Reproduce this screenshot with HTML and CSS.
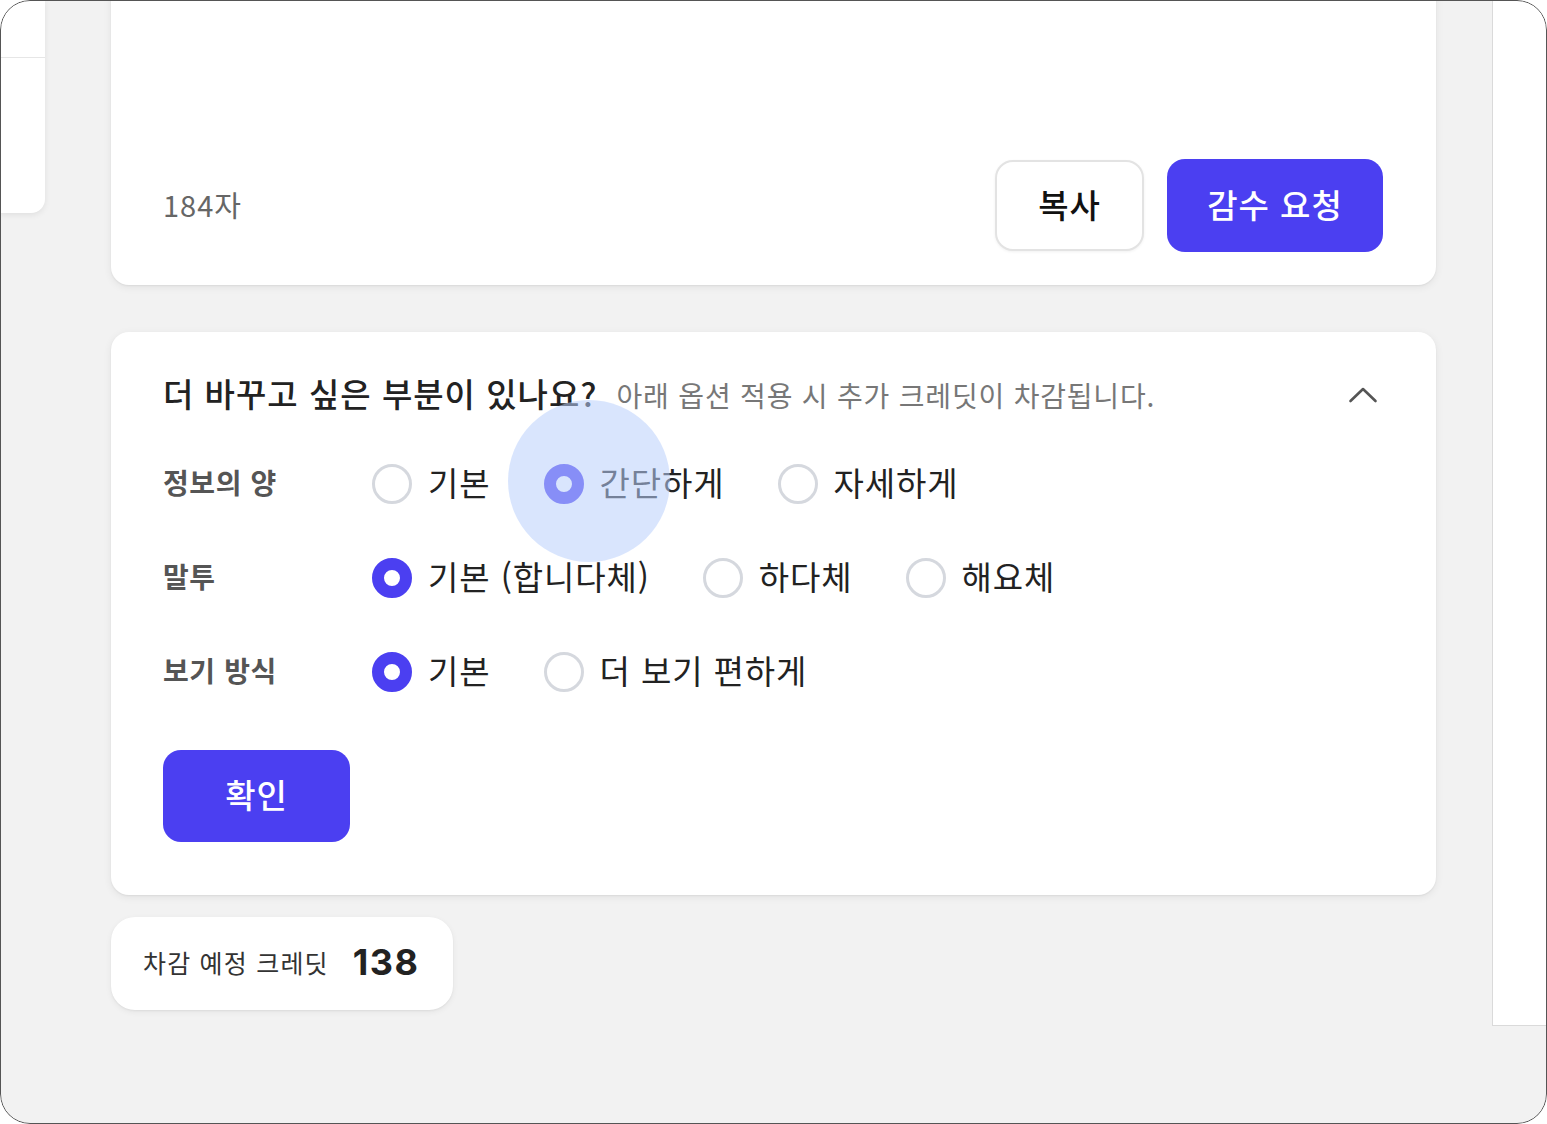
FILE: index.html
```html
<!DOCTYPE html>
<html lang="ko">
<head>
  <meta charset="UTF-8">
  <title>감수 옵션</title>
  <link rel="stylesheet" href="styles.css">
</head>
<body>

<div class="frame">
  <!-- left sidebar stub -->
  <div class="side-left">
    <div class="side-left-top"></div>
  </div>

  <div class="main">
    <!-- editor card -->
    <div class="card card-editor">
      <div class="editor-area"></div>
      <div class="editor-footer">
        <span class="char-count">184자</span>
        <div class="editor-actions">
          <button class="btn btn-outline">복사</button>
          <button class="btn btn-primary btn-wide">감수 요청</button>
        </div>
      </div>
    </div>

    <!-- options card -->
    <div class="card card-options">
      <div class="options-head">
        <span class="options-title">더 바꾸고 싶은 부분이 있나요?</span>
        <span class="options-sub">아래 옵션 적용 시 추가 크레딧이 차감됩니다.</span>
        <span class="chevron">
          <svg width="40" height="40" viewBox="0 0 40 40">
            <polyline points="7.5,26 20,14 32.5,26" fill="none" stroke="#555" stroke-width="2.6" stroke-linecap="round" stroke-linejoin="round"/>
          </svg>
        </span>
      </div>

      <div class="option-rows">
        <div class="option-row">
          <span class="option-label">정보의 양</span>
          <div class="option-list">
            <label class="option"><span class="radio"></span><span class="option-text">기본</span></label>
            <label class="option"><span class="radio is-checked"></span><span class="option-text">간단하게</span></label>
            <label class="option"><span class="radio"></span><span class="option-text">자세하게</span></label>
          </div>
        </div>
        <div class="option-row">
          <span class="option-label">말투</span>
          <div class="option-list">
            <label class="option"><span class="radio is-checked"></span><span class="option-text">기본 (합니다체)</span></label>
            <label class="option"><span class="radio"></span><span class="option-text">하다체</span></label>
            <label class="option"><span class="radio"></span><span class="option-text">해요체</span></label>
          </div>
        </div>
        <div class="option-row">
          <span class="option-label">보기 방식</span>
          <div class="option-list">
            <label class="option"><span class="radio is-checked"></span><span class="option-text">기본</span></label>
            <label class="option"><span class="radio"></span><span class="option-text">더 보기 편하게</span></label>
          </div>
        </div>
      </div>

      <button class="btn btn-primary btn-confirm">확인</button>
    </div>

    <!-- credit summary -->
    <div class="credit-box">
      <span class="credit-label">차감 예정 크레딧</span>
      <span class="credit-value">138</span>
    </div>
  </div>

  <!-- right panel stub -->
  <div class="side-right"></div>

  <!-- click highlight -->
  <div class="tap-ripple"></div>
</div>

</body>
</html>
```

FILE: styles.css
```css
html, body {
  margin: 0;
  padding: 0;
  background: #fff;
}

body {
  font-family: "Noto Sans CJK KR", "Noto Sans", sans-serif;
  color: #222;
}

.frame {
  position: relative;
  width: 1547px;
  height: 1124px;
  display: flex;
  align-items: flex-start;
  background: #f2f2f2;
  border-radius: 30px;
  overflow: hidden;
}

.frame::after {
  content: "";
  position: absolute;
  inset: 0;
  border: 1.5px solid #555;
  border-radius: 30px;
  pointer-events: none;
  z-index: 10;
}

/* side stubs */
.side-left {
  flex-shrink: 0;
  width: 45px;
  height: 213px;
  background: #fff;
  border-bottom-right-radius: 14px;
  box-shadow: 0 2px 6px rgba(0, 0, 0, 0.08);
}

.side-left-top {
  height: 57px;
  border-bottom: 1px solid #e6e6e6;
}

.side-right {
  flex-shrink: 0;
  box-sizing: border-box;
  width: 55px;
  height: 1026px;
  margin-left: auto;
  background: #fff;
  border-left: 1px solid #dadada;
  border-bottom: 1px solid #dadada;
}

/* main column */
.main {
  flex-shrink: 0;
  width: 1325px;
  margin-left: 66px;
  display: flex;
  flex-direction: column;
}

.card {
  box-sizing: border-box;
  background: #fff;
  border-radius: 18px;
  box-shadow: 0 1px 2px rgba(0, 0, 0, 0.06), 0 2px 8px rgba(0, 0, 0, 0.07);
}

.card-editor {
  margin-top: -115px;
  padding: 0 53px 33px 52px;
}

.editor-area {
  height: 274px;
}

.editor-footer {
  display: flex;
  align-items: center;
  justify-content: space-between;
  height: 93px;
}

.char-count {
  padding-bottom: 4px;
  font-size: 29px;
  color: #666;
  letter-spacing: 1px;
}

.editor-actions {
  display: flex;
  align-items: center;
  gap: 23px;
}

.btn {
  box-sizing: border-box;
  border: none;
  padding: 0 0 4px;
  font-family: inherit;
  font-size: 33px;
  font-weight: 500;
  letter-spacing: 1px;
  border-radius: 18px;
  cursor: pointer;
}

.btn-outline {
  width: 149px;
  height: 91px;
  background: #fff;
  color: #111;
  border: 2px solid #e3e3e3;
  box-shadow: 0 1px 3px rgba(0, 0, 0, 0.06);
}

.btn-primary {
  background: #4b3ff1;
  color: #fff;
}

.btn-wide {
  width: 216px;
  height: 93px;
}

/* options card */
.card-options {
  margin-top: 47px;
  padding: 42px 53px 53px 52px;
  display: flex;
  flex-direction: column;
}

.options-head {
  display: flex;
  align-items: center;
  height: 42px;
}

.options-title {
  padding-bottom: 4px;
  font-size: 33px;
  font-weight: 500;
  color: #222;
  letter-spacing: 1px;
}

.options-sub {
  margin-left: 19px;
  font-size: 28px;
  color: #777;
  letter-spacing: 0.8px;
}

.chevron {
  margin-left: auto;
  width: 40px;
  height: 40px;
}

.option-rows {
  margin-top: 46px;
  display: flex;
  flex-direction: column;
  gap: 50px;
}

.option-row {
  display: flex;
  align-items: center;
  height: 44px;
}

.option-label {
  width: 209px;
  flex-shrink: 0;
  padding-bottom: 4px;
  font-size: 28px;
  font-weight: 600;
  color: #555;
  letter-spacing: 0.6px;
}

.option-list {
  display: flex;
  align-items: center;
  gap: 53px;
}

.option {
  display: flex;
  align-items: center;
  gap: 16px;
  font-size: 33px;
  color: #222;
  cursor: pointer;
}

.option-text {
  padding-bottom: 4px;
  letter-spacing: 0.9px;
  white-space: nowrap;
}

.radio {
  flex-shrink: 0;
  box-sizing: border-box;
  width: 40px;
  height: 40px;
  border-radius: 50%;
  border: 3px solid #d5d8de;
  background: #fff;
}

.radio.is-checked {
  border: 12px solid #4b3ff1;
}

.btn-confirm {
  margin-top: 56px;
  width: 187px;
  height: 92px;
}

/* credit */
.credit-box {
  box-sizing: border-box;
  margin-top: 22px;
  width: 342px;
  height: 93px;
  padding: 0 20px 0 32px;
  display: flex;
  align-items: center;
  gap: 24px;
  background: #fff;
  border-radius: 24px;
  box-shadow: 0 1px 2px rgba(0, 0, 0, 0.05), 0 2px 6px rgba(0, 0, 0, 0.06);
}

.credit-label {
  flex-shrink: 0;
  white-space: nowrap;
  padding-bottom: 3px;
  font-size: 25px;
  color: #333;
  letter-spacing: 1.2px;
}

.credit-value {
  flex-shrink: 0;
  padding-bottom: 4px;
  font-family: "Inter", "Noto Sans CJK KR", sans-serif;
  font-size: 36px;
  font-weight: 700;
  color: #222;
  letter-spacing: 1.5px;
}

.tap-ripple {
  position: absolute;
  left: 508px;
  top: 400px;
  width: 162px;
  height: 162px;
  border-radius: 50%;
  background: rgba(185, 208, 251, 0.55);
  pointer-events: none;
}
```
